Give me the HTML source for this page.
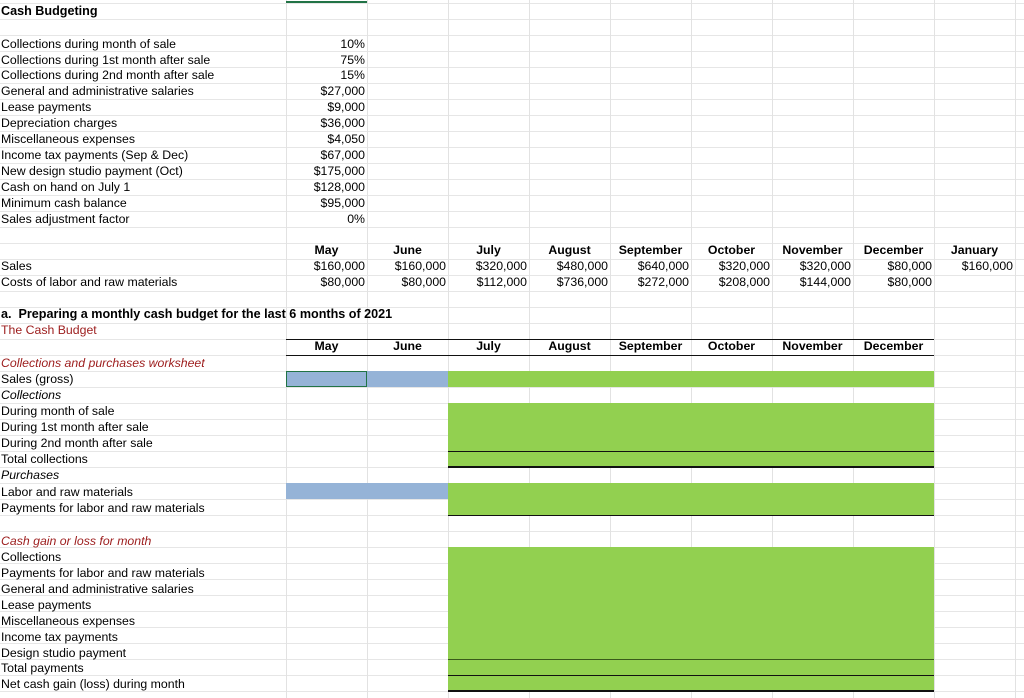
<!DOCTYPE html>
<html><head><style>
body{margin:0;width:1024px;height:698px;overflow:hidden;background:#fff;position:relative;font-family:"Liberation Sans",Arial,sans-serif;font-size:12.3px;color:#000}
.h{position:absolute;left:0;width:1024px;height:1px;background:#e6e6e6}
.v{position:absolute;top:0;height:698px;width:1px;background:#e2e2e2}
.t{position:absolute;height:16px;line-height:16px;white-space:nowrap}
.r{text-align:right;width:78px}
.c{text-align:center;width:81px;font-weight:bold}
.red{color:#9c1c1c}
.i{font-style:italic}
.f{position:absolute}
.bl{position:absolute;height:1px;background:#111}
</style></head><body>
<div class="h" style="top:3px"></div><div class="h" style="top:19px"></div><div class="h" style="top:35px"></div><div class="h" style="top:51px"></div><div class="h" style="top:67px"></div><div class="h" style="top:83px"></div><div class="h" style="top:99px"></div><div class="h" style="top:115px"></div><div class="h" style="top:131px"></div><div class="h" style="top:147px"></div><div class="h" style="top:163px"></div><div class="h" style="top:179px"></div><div class="h" style="top:195px"></div><div class="h" style="top:211px"></div><div class="h" style="top:227px"></div><div class="h" style="top:243px"></div><div class="h" style="top:259px"></div><div class="h" style="top:275px"></div><div class="h" style="top:291px"></div><div class="h" style="top:307px"></div><div class="h" style="top:323px"></div><div class="h" style="top:339px"></div><div class="h" style="top:355px"></div><div class="h" style="top:371px"></div><div class="h" style="top:387px"></div><div class="h" style="top:403px"></div><div class="h" style="top:419px"></div><div class="h" style="top:435px"></div><div class="h" style="top:451px"></div><div class="h" style="top:467px"></div><div class="h" style="top:483px"></div><div class="h" style="top:499px"></div><div class="h" style="top:515px"></div><div class="h" style="top:531px"></div><div class="h" style="top:547px"></div><div class="h" style="top:563px"></div><div class="h" style="top:579px"></div><div class="h" style="top:595px"></div><div class="h" style="top:611px"></div><div class="h" style="top:627px"></div><div class="h" style="top:643px"></div><div class="h" style="top:659px"></div><div class="h" style="top:675px"></div><div class="h" style="top:691px"></div>
<div class="v" style="left:286px"></div><div class="v" style="left:367px"></div><div class="v" style="left:448px"></div><div class="v" style="left:529px"></div><div class="v" style="left:610px"></div><div class="v" style="left:691px"></div><div class="v" style="left:772px"></div><div class="v" style="left:853px"></div><div class="v" style="left:934px"></div><div class="v" style="left:1015px"></div>
<div style="position:absolute;left:286px;top:1px;width:81px;height:2px;background:#217346"></div>

<div class="f" style="left:286px;top:371px;width:162px;height:16px;background:#95b3d7"></div>
<div class="f" style="left:286px;top:371px;width:79px;height:14px;border:1px solid #217346"></div>
<div class="f" style="left:448px;top:371px;width:486px;height:16px;background:#92d050"></div>
<div class="f" style="left:448px;top:403px;width:486px;height:64px;background:#92d050"></div>
<div class="f" style="left:286px;top:483px;width:162px;height:16px;background:#95b3d7"></div>
<div class="f" style="left:448px;top:483px;width:486px;height:32px;background:#92d050"></div>
<div class="f" style="left:448px;top:547px;width:486px;height:145px;background:#92d050"></div>
<div class="bl" style="left:448px;top:451px;width:486px"></div>
<div class="bl" style="left:448px;top:466px;width:486px;height:2px"></div>
<div class="bl" style="left:448px;top:515px;width:486px"></div>
<div class="bl" style="left:448px;top:659px;width:486px;background:#3a5a1a"></div>
<div class="bl" style="left:448px;top:675px;width:486px"></div>
<div class="bl" style="left:448px;top:690px;width:486px;height:2px"></div>
<div class="bl" style="left:286px;top:339px;width:648px"></div>
<div class="bl" style="left:286px;top:355px;width:648px"></div>

<div class="t" style="left:1px;top:3px;font-weight:bold;font-size:12.6px">Cash Budgeting</div>
<div class="t" style="left:1px;top:36px">Collections during month of sale</div><div class="t r" style="left:287px;top:36px">10%</div>
<div class="t" style="left:1px;top:52px">Collections during 1st month after sale</div><div class="t r" style="left:287px;top:52px">75%</div>
<div class="t" style="left:1px;top:67px">Collections during 2nd month after sale</div><div class="t r" style="left:287px;top:67px">15%</div>
<div class="t" style="left:1px;top:83px">General and administrative salaries</div><div class="t r" style="left:287px;top:83px">$27,000</div>
<div class="t" style="left:1px;top:99px">Lease payments</div><div class="t r" style="left:287px;top:99px">$9,000</div>
<div class="t" style="left:1px;top:115px">Depreciation charges</div><div class="t r" style="left:287px;top:115px">$36,000</div>
<div class="t" style="left:1px;top:131px">Miscellaneous expenses</div><div class="t r" style="left:287px;top:131px">$4,050</div>
<div class="t" style="left:1px;top:147px">Income tax payments (Sep &amp; Dec)</div><div class="t r" style="left:287px;top:147px">$67,000</div>
<div class="t" style="left:1px;top:163px">New design studio payment (Oct)</div><div class="t r" style="left:287px;top:163px">$175,000</div>
<div class="t" style="left:1px;top:179px">Cash on hand on July 1</div><div class="t r" style="left:287px;top:179px">$128,000</div>
<div class="t" style="left:1px;top:195px">Minimum cash balance</div><div class="t r" style="left:287px;top:195px">$95,000</div>
<div class="t" style="left:1px;top:211px">Sales adjustment factor</div><div class="t r" style="left:287px;top:211px">0%</div>

<div class="t c" style="left:286px;top:242px">May</div><div class="t c" style="left:367px;top:242px">June</div><div class="t c" style="left:448px;top:242px">July</div><div class="t c" style="left:529px;top:242px">August</div><div class="t c" style="left:610px;top:242px">September</div><div class="t c" style="left:691px;top:242px">October</div><div class="t c" style="left:772px;top:242px">November</div><div class="t c" style="left:853px;top:242px">December</div><div class="t c" style="left:934px;top:242px">January</div>
<div class="t" style="left:1px;top:258px">Sales</div>
<div class="t r" style="left:287px;top:258px">$160,000</div><div class="t r" style="left:368px;top:258px">$160,000</div><div class="t r" style="left:449px;top:258px">$320,000</div><div class="t r" style="left:530px;top:258px">$480,000</div><div class="t r" style="left:611px;top:258px">$640,000</div><div class="t r" style="left:692px;top:258px">$320,000</div><div class="t r" style="left:773px;top:258px">$320,000</div><div class="t r" style="left:854px;top:258px">$80,000</div><div class="t r" style="left:935px;top:258px">$160,000</div>
<div class="t" style="left:1px;top:274px">Costs of labor and raw materials</div>
<div class="t r" style="left:287px;top:274px">$80,000</div><div class="t r" style="left:368px;top:274px">$80,000</div><div class="t r" style="left:449px;top:274px">$112,000</div><div class="t r" style="left:530px;top:274px">$736,000</div><div class="t r" style="left:611px;top:274px">$272,000</div><div class="t r" style="left:692px;top:274px">$208,000</div><div class="t r" style="left:773px;top:274px">$144,000</div><div class="t r" style="left:854px;top:274px">$80,000</div>

<div class="t" style="left:1px;top:306px;font-weight:bold;font-size:12.6px">a.&nbsp; Preparing a monthly cash budget for the last 6 months of 2021</div>
<div class="t red" style="left:1px;top:322px">The Cash Budget</div>
<div class="t c" style="left:286px;top:338px">May</div><div class="t c" style="left:367px;top:338px">June</div><div class="t c" style="left:448px;top:338px">July</div><div class="t c" style="left:529px;top:338px">August</div><div class="t c" style="left:610px;top:338px">September</div><div class="t c" style="left:691px;top:338px">October</div><div class="t c" style="left:772px;top:338px">November</div><div class="t c" style="left:853px;top:338px">December</div>

<div class="t red i" style="left:1px;top:355px">Collections and purchases worksheet</div>
<div class="t" style="left:1px;top:371px">Sales (gross)</div>
<div class="t i" style="left:1px;top:387px">Collections</div>
<div class="t" style="left:1px;top:403px">During month of sale</div>
<div class="t" style="left:1px;top:419px">During 1st month after sale</div>
<div class="t" style="left:1px;top:435px">During 2nd month after sale</div>
<div class="t" style="left:1px;top:451px">Total collections</div>
<div class="t i" style="left:1px;top:467px">Purchases</div>
<div class="t" style="left:1px;top:484px">Labor and raw materials</div>
<div class="t" style="left:1px;top:500px">Payments for labor and raw materials</div>
<div class="t red i" style="left:1px;top:533px">Cash gain or loss for month</div>
<div class="t" style="left:1px;top:549px">Collections</div>
<div class="t" style="left:1px;top:565px">Payments for labor and raw materials</div>
<div class="t" style="left:1px;top:581px">General and administrative salaries</div>
<div class="t" style="left:1px;top:597px">Lease payments</div>
<div class="t" style="left:1px;top:613px">Miscellaneous expenses</div>
<div class="t" style="left:1px;top:629px">Income tax payments</div>
<div class="t" style="left:1px;top:645px">Design studio payment</div>
<div class="t" style="left:1px;top:660px">Total payments</div>
<div class="t" style="left:1px;top:676px">Net cash gain (loss) during month</div>
</body></html>
